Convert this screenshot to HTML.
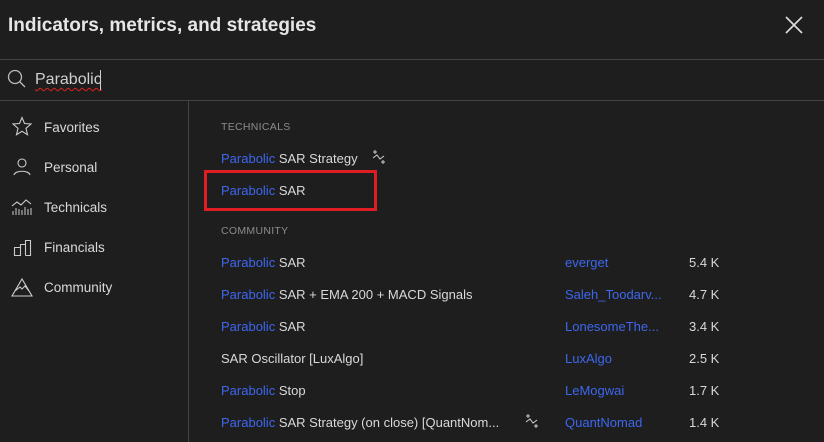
<!DOCTYPE html>
<html><head><style>
body{margin:0;width:824px;height:442px;background:#1e1e1e;font-family:"Liberation Sans",sans-serif;color:#d9d9d9;overflow:hidden;position:relative}
.a{position:absolute;white-space:nowrap}
.t{font-size:13px;line-height:16px}
.b{color:#3d67ee}
.h{font-size:10.5px;color:#8c8c8c;letter-spacing:.3px}
.ln{position:absolute;background:#434343}
svg{position:absolute}
</style></head><body>
<div class="a" style="left:8px;top:15px;font-size:19px;font-weight:bold;color:#e6e6e6">Indicators, metrics, and strategies</div>
<svg style="left:785px;top:16px" width="18" height="18" viewBox="0 0 18 18"><path d="M1 1L17 17M17 1L1 17" stroke="#ddd" stroke-width="1.6"/></svg>
<div class="ln" style="left:0;top:59px;width:824px;height:1px"></div>
<svg style="left:7px;top:69px" width="20" height="20" viewBox="0 0 20 20"><circle cx="8" cy="8" r="6.5" stroke="#bbb" stroke-width="1.3" fill="none"/><path d="M13 13L18 18" stroke="#bbb" stroke-width="1.3"/></svg>
<div class="a" style="left:35px;top:71px;font-size:16px;color:#d0d0d0;text-decoration:underline wavy #d22;text-underline-offset:3px;text-decoration-thickness:1px">Parabolic</div>
<div class="ln" style="left:100px;top:70px;width:1px;height:20px;background:#ccc"></div>
<div class="ln" style="left:0;top:100px;width:824px;height:1px"></div>
<div class="ln" style="left:188px;top:101px;width:1px;height:341px"></div>
<svg style="left:12px;top:116px" width="20" height="20" viewBox="0 0 20 20"><path d="M10 1.5L12.5 7.5L19 8L14 12.3L15.5 18.7L10 15.3L4.5 18.7L6 12.3L1 8L7.5 7.5Z" fill="none" stroke="#ccc" stroke-width="1.1"/></svg>
<svg style="left:13px;top:157px" width="20" height="20" viewBox="0 0 20 20"><circle cx="9" cy="6" r="4" fill="none" stroke="#ccc" stroke-width="1.1"/><path d="M1 18C2 13 16 13 17 18" fill="none" stroke="#ccc" stroke-width="1.1"/></svg>
<svg style="left:11px;top:197px" width="22" height="20" viewBox="0 0 22 20"><path d="M1 9L6 5L10 8L15 3L20 7" fill="none" stroke="#ccc" stroke-width="1.1"/><path d="M2 18V14M5 18V11M8 18V12M11 18V13M14 18V10M17 18V12M20 18V11" stroke="#ccc" stroke-width="1"/></svg>
<svg style="left:13px;top:238px" width="20" height="20" viewBox="0 0 20 20"><path d="M1.5 17.5H7.5V9.5H1.5ZM7.5 17.5V6.5H12.5V17.5M12.5 17.5V2.5H17.5V17.5H12.5" fill="none" stroke="#ccc" stroke-width="1.1"/></svg>
<svg style="left:11px;top:277px" width="22" height="20" viewBox="0 0 22 20"><path d="M1 19H21L11 2Z M4 14L9 10L11 12L14 9L18 14" fill="none" stroke="#ccc" stroke-width="1.1"/></svg>
<div class="a t" style="left:44px;top:120px;font-size:13.5px">Favorites</div>
<div class="a t" style="left:44px;top:160px;font-size:13.5px">Personal</div>
<div class="a t" style="left:44px;top:200px;font-size:13.5px">Technicals</div>
<div class="a t" style="left:44px;top:240px;font-size:13.5px">Financials</div>
<div class="a t" style="left:44px;top:280px;font-size:13.5px">Community</div>
<div class="a h" style="left:221px;top:121px">TECHNICALS</div>
<div class="a t" style="left:221px;top:151px"><span class="b">Parabolic</span> SAR Strategy</div>
<svg style="left:372px;top:149px" width="14" height="16" viewBox="0 0 14 16"><path d="M3 1V5M1 3H5M11 11V15M9 13H13M1 9L5 6L8 10L12 7" fill="none" stroke="#ccc" stroke-width="1"/></svg>
<div class="a t" style="left:221px;top:183px"><span class="b">Parabolic</span> SAR</div>
<div class="a" style="left:204px;top:170px;width:167px;height:35px;border:3px solid #e11d24"></div>
<div class="a h" style="left:221px;top:225px">COMMUNITY</div>
<div class="a t" style="left:221px;top:255px"><span class="b">Parabolic</span> SAR</div>
<div class="a t" style="left:221px;top:287px"><span class="b">Parabolic</span> SAR + EMA 200 + MACD Signals</div>
<div class="a t" style="left:221px;top:319px"><span class="b">Parabolic</span> SAR</div>
<div class="a t" style="left:221px;top:351px">SAR Oscillator [LuxAlgo]</div>
<div class="a t" style="left:221px;top:383px"><span class="b">Parabolic</span> Stop</div>
<div class="a t" style="left:221px;top:415px"><span class="b">Parabolic</span> SAR Strategy (on close) [QuantNom...</div>
<svg style="left:525px;top:413px" width="14" height="16" viewBox="0 0 14 16"><path d="M3 1V5M1 3H5M11 11V15M9 13H13M1 9L5 6L8 10L12 7" fill="none" stroke="#ccc" stroke-width="1"/></svg>
<div class="a t b" style="left:565px;top:255px">everget</div>
<div class="a t b" style="left:565px;top:287px">Saleh_Toodarv...</div>
<div class="a t b" style="left:565px;top:319px">LonesomeThe...</div>
<div class="a t b" style="left:565px;top:351px">LuxAlgo</div>
<div class="a t b" style="left:565px;top:383px">LeMogwai</div>
<div class="a t b" style="left:565px;top:415px">QuantNomad</div>
<div class="a t" style="left:689px;top:255px">5.4 K</div>
<div class="a t" style="left:689px;top:287px">4.7 K</div>
<div class="a t" style="left:689px;top:319px">3.4 K</div>
<div class="a t" style="left:689px;top:351px">2.5 K</div>
<div class="a t" style="left:689px;top:383px">1.7 K</div>
<div class="a t" style="left:689px;top:415px">1.4 K</div>
</body></html>
